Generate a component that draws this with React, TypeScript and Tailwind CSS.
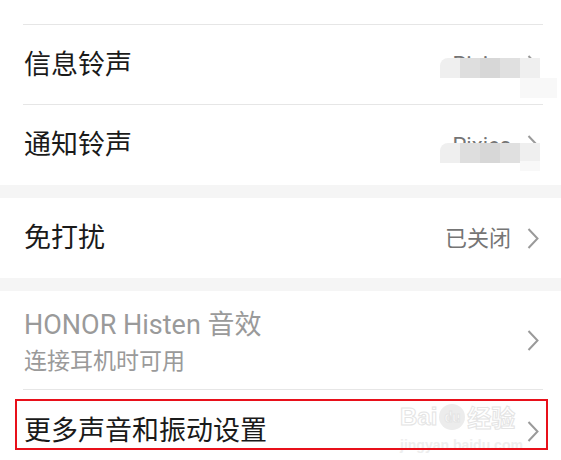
import React from "react";

const font = { fontFamily: '"Roboto", "Noto Sans CJK SC", sans-serif' };

const Chevron = () => (
  <svg width="12" height="21" viewBox="0 0 12 21" className="shrink-0">
    <polyline points="1.5,1 10.5,10.5 1.5,20" fill="none" stroke="#9a9a9a" strokeWidth="2" />
  </svg>
);

const Divider = () => <div className="h-px bg-[#e6e6e6] ml-[23px] mr-[18px]" />;

const Band = () => <div className="h-[13px] bg-[#f5f5f5]" />;

const mosaic = ["#efefef", "#dedede", "#d7d7d7", "#e0e0e0", "#efefef"];

// pixelated blur that hides the ringtone name
const Mosaic = ({ top, faintTop, faintH, faintW }: { top: number; faintTop: number; faintH: number; faintW: number }) => (
  <>
    <div className="absolute left-[440px] flex h-[20px] overflow-hidden rounded-tl-[8px]" style={{ top }}>
      {mosaic.map((c, i) => (
        <div key={i} className="h-full w-[20px]" style={{ background: c }} />
      ))}
    </div>
    <div className="absolute left-[520px] bg-[#f8f8f8]" style={{ top: faintTop, height: faintH, width: faintW }} />
  </>
);

const SimpleRow = ({ title, value, h = "h-[80px]" }: { title: string; value?: string; h?: string }) => (
  <div className={`relative flex items-center justify-between pl-[24px] pr-[22px] pt-[1px] ${h}`}>
    <span className="text-[27px] leading-none text-[#1a1a1a]">{title}</span>
    <div className="flex items-center gap-[16px]">
      {value && <span className="text-[22px] leading-none text-[#757575]">{value}</span>}
      <Chevron />
    </div>
  </div>
);

export default function App() {
  return (
    <div className="relative h-[460px] w-[561px] overflow-hidden bg-white" style={font}>
      <div className="h-[24px]" />
      <Divider />

      <div className="relative">
        <SimpleRow title="信息铃声" value="Pixies" h="h-[79px]" />
        <Mosaic top={33} faintTop={53} faintH={20} faintW={37} />
      </div>
      <Divider />

      <div className="relative">
        <SimpleRow title="通知铃声" value="Pixies" />
        <Mosaic top={38} faintTop={56} faintH={10} faintW={20} />
      </div>

      <Band />
      <SimpleRow title="免打扰" value="已关闭" />
      <Band />

      <div className="flex h-[98px] items-start justify-between pl-[24px] pr-[22px]">
        <div className="flex flex-col pt-[19px]">
          <span className="text-[27px] leading-[30px] text-[#9a9a9a]">HONOR Histen 音效</span>
          <span className="mt-[8px] text-[23px] leading-[28px] text-[#9a9a9a]">连接耳机时可用</span>
        </div>
        <div className="self-center">
          <Chevron />
        </div>
      </div>
      <Divider />

      <div className="relative">
        <div className="flex h-[80px] items-center justify-between pl-[24px] pr-[22px] pt-[3px]">
          <span className="text-[27px] leading-none text-[#1a1a1a]">更多声音和振动设置</span>
          <Chevron />
        </div>

        {/* baidu watermark */}
        <div className="pointer-events-none absolute left-[400px] top-[14px] flex items-center gap-[2px] font-bold text-white [-webkit-text-stroke:1px_#e4e4e4]">
          <span className="text-[24px] leading-none" style={{ fontFamily: '"Liberation Sans", sans-serif' }}>Bai</span>
          <span className="flex h-[26px] w-[26px] items-center justify-center rounded-full bg-[#ececec] text-[14px] leading-none">du</span>
          <span className="text-[24px] leading-none" style={{ fontFamily: '"Noto Sans CJK SC", sans-serif' }}>经验</span>
        </div>
        <div className="pointer-events-none absolute left-[400px] top-[48px] text-[14px] font-bold leading-none text-[#eeeeee]" style={{ fontFamily: '"Liberation Sans", sans-serif' }}>
          jingyan.baidu.com
        </div>

        {/* red highlight */}
        <div className="pointer-events-none absolute left-[15px] top-[9px] h-[51px] w-[533px] border-2 border-[#e8101a]" />
      </div>
    </div>
  );
}
